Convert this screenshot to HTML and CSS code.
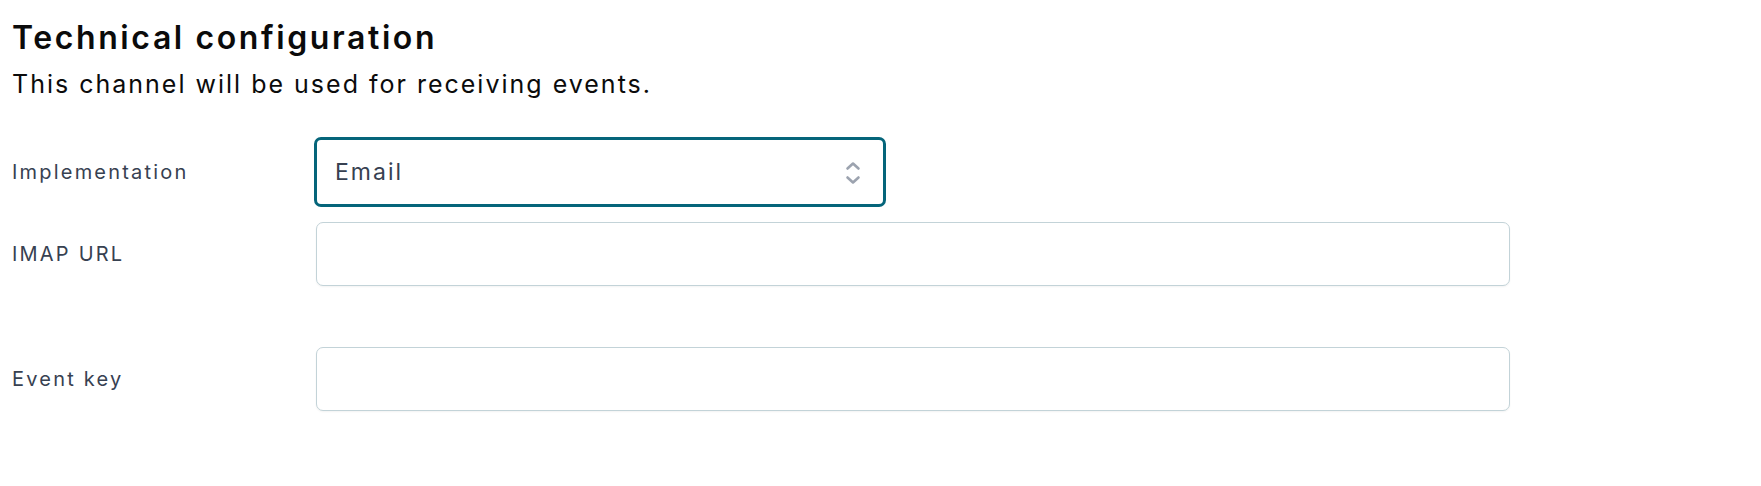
FILE: index.html
```html
<!DOCTYPE html>
<html lang="en">
<head>
    <meta charset="UTF-8">
    <meta name="viewport" content="width=device-width, initial-scale=1.0">
    <title>Technical configuration</title>
    <link rel="stylesheet" href="styles.css">
</head>
<body>
    <section class="config">
        <h2 class="config-title">Technical configuration</h2>
        <p class="config-desc">This channel will be used for receiving events.</p>

        <div class="form">
            <div class="field">
                <label for="implementation">Implementation</label>
                <div class="select-wrap">
                    <select id="implementation" class="select">
                        <option>Email</option>
                    </select>
                    <svg class="select-arrows" width="16" height="24" viewBox="0 0 16 24">
                        <path d="M2.5 7.5 L8 2.5 L13.5 7.5" fill="none" stroke="#9ca3af" stroke-width="2.6" stroke-linecap="round" stroke-linejoin="round"/>
                        <path d="M2.5 16.5 L8 21.5 L13.5 16.5" fill="none" stroke="#9ca3af" stroke-width="2.6" stroke-linecap="round" stroke-linejoin="round"/>
                    </svg>
                </div>
            </div>

            <div class="field field-help">
                <label for="imapUrl">IMAP URL</label>
                <input type="text" id="imapUrl" class="input">
            </div>

            <div class="field">
                <label for="eventKey">Event key</label>
                <input type="text" id="eventKey" class="input">
            </div>
        </div>
    </section>
</body>
</html>
```

FILE: styles.css
```css
body {
    font-family: Inter, "Open Sans", sans-serif;
    margin: 0;
    padding: 0;
    background-color: #ffffff;
    color: #0b0b0b;
}

.config {
    padding: 18px 12px 0 12px;
}

.config-title {
    font-size: 32px;
    font-weight: 600;
    line-height: 40px;
    letter-spacing: 2.6px;
    margin: 0;
}

.config-desc {
    font-size: 25px;
    line-height: 34px;
    letter-spacing: 2px;
    margin: 9px 0 0 0;
}

.form {
    margin-top: 36px;
}

.field {
    display: grid;
    grid-template-columns: 304px 1194px;
    align-items: center;
    margin-bottom: 15px;
}

.field-help {
    margin-bottom: 61px;
}

.field label {
    font-size: 20px;
    letter-spacing: 2.2px;
    color: #374151;
}

.select-wrap {
    position: relative;
    width: 572px;
}

.select {
    appearance: none;
    -webkit-appearance: none;
    width: 572px;
    height: 70px;
    margin-left: -2px;
    border: 3px solid #05657a;
    border-radius: 7px;
    background: #ffffff;
    padding: 0 18px;
    font-family: inherit;
    font-size: 23px;
    letter-spacing: 2px;
    color: #374151;
    outline: none;
}

.select-arrows {
    position: absolute;
    right: 27px;
    top: 24px;
}

.input {
    box-sizing: border-box;
    width: 1194px;
    height: 64px;
    border: 1px solid #c3d3d8;
    border-radius: 7px;
    box-shadow: 0 1px 2px rgba(0, 0, 0, 0.05);
    padding: 0 16px;
    font-family: inherit;
    font-size: 20px;
    outline: none;
}
```
